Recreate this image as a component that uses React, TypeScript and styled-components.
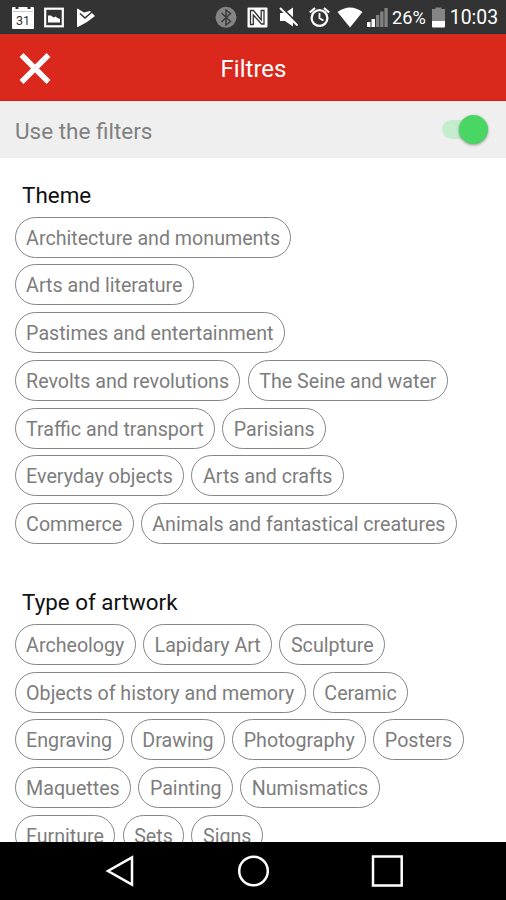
import React from "react";
import styled, { createGlobalStyle } from "styled-components";

const GlobalStyle = createGlobalStyle`
  * { box-sizing: border-box; }
  body { margin: 0; background: #fff; overflow: hidden; }
`;

const Screen = styled.div`
  width: 506px;
  height: 900px;
  display: flex;
  flex-direction: column;
  overflow: hidden;
  background: #fff;
  font-family: Roboto, "Liberation Sans", sans-serif;
`;

const StatusBar = styled.div`
  flex: 0 0 34px;
  height: 34px;
  display: flex;
  align-items: center;
  background: #333333;
  border-bottom: 1px solid #243234;
  color: #fff;
`;

const StatusIcon = styled.svg<{ $gap: number }>`
  flex: none;
  height: 34px;
  margin-left: ${(p) => p.$gap}px;
  display: block;
`;

const StatusText = styled.span<{ $size: number; $gap: number }>`
  margin-left: ${(p) => p.$gap}px;
  font-size: ${(p) => p.$size}px;
  line-height: 30px;
  padding-top: 3px;
  white-space: nowrap;
`;

const Header = styled.header`
  flex: 0 0 67px;
  height: 67px;
  display: grid;
  grid-template-columns: 70px 1fr 70px;
  align-items: center;
  background: #da291c;
  border-bottom: 1px solid #d32018;
  color: #fff;
`;

const CloseButton = styled.button`
  border: 0;
  padding: 2px 0 0;
  background: none;
  height: 66px;
  display: flex;
  align-items: center;
  justify-content: center;
`;

const Title = styled.h1`
  margin: 0;
  padding: 3px 0 0 1px;
  text-align: center;
  font-size: 24px;
  font-weight: 400;
`;

const ToggleRow = styled.div`
  flex: 0 0 56.5px;
  display: flex;
  align-items: center;
  justify-content: space-between;
  padding: 4px 18px 0 15px;
  background: #efefef;
  color: #808080;
  font-size: 22.5px;
`;

const Switch = styled.div`
  width: 46px;
  height: 19px;
  margin-top: -3px;
  border-radius: 10px;
  background: #c3edcc;
  display: flex;
  align-items: center;
  justify-content: flex-end;
`;

const Knob = styled.div`
  width: 29px;
  height: 29px;
  flex: none;
  border-radius: 50%;
  background: #4ad662;
  box-shadow: 0 1px 3px rgba(0, 0, 0, 0.4);
`;

const Content = styled.main`
  flex: 1 1 0;
  min-height: 0;
  overflow: hidden;
  padding: 20px 14.5px 0;
`;

const Section = styled.section`
  margin-bottom: 40.5px;
`;

const Heading = styled.h2`
  margin: 0;
  padding-left: 7.6px;
  height: 39px;
  line-height: 34px;
  font-size: 22.4px;
  font-weight: 400;
  color: #111;
`;

const Chips = styled.div`
  display: flex;
  flex-direction: column;
  gap: 6.8px;
`;

const ChipRow = styled.div`
  display: flex;
  gap: 7.2px;
`;

const Chip = styled.button`
  height: 41px;
  flex: none;
  padding: 2px 10.4px 0 10.6px;
  border: 1px solid #858585;
  border-radius: 21px;
  background: #fff;
  color: #7d7d7d;
  font-family: inherit;
  font-size: 19.65px;
  white-space: nowrap;
`;

const NavBar = styled.nav`
  flex: 0 0 58px;
  display: flex;
  justify-content: center;
  gap: 102px;
  align-items: center;
  background: #000;
`;

const NavIcon = styled.svg`
  width: 32px;
  height: 32px;
  flex: none;
  fill: none;
  stroke: #fff;
  stroke-width: 2.5;
`;

const sections = [
  {
    title: "Theme",
    rows: [
      ["Architecture and monuments"],
      ["Arts and literature"],
      ["Pastimes and entertainment"],
      ["Revolts and revolutions", "The Seine and water"],
      ["Traffic and transport", "Parisians"],
      ["Everyday objects", "Arts and crafts"],
      ["Commerce", "Animals and fantastical creatures"],
    ],
  },
  {
    title: "Type of artwork",
    rows: [
      ["Archeology", "Lapidary Art", "Sculpture"],
      ["Objects of history and memory", "Ceramic"],
      ["Engraving", "Drawing", "Photography", "Posters"],
      ["Maquettes", "Painting", "Numismatics"],
      ["Furniture", "Sets", "Signs"],
    ],
  },
];

const CalendarDay = styled.text`
  font-family: Roboto, sans-serif;
  font-size: 12.5px;
  fill: #333;
`;

function StatusIcons() {
  return (
    <StatusBar>
      <StatusIcon $gap={12} width="22" viewBox="0 0 22 34">
        <path d="M1 7h2.500v2h3v-2h9v2h3v-2H21q1 0 1 1v20q0 1-1 1H1q-1 0-1-1V8q0-1 1-1z" fill="#fff" />
        <path d="M1 11.500h20" stroke="#bbb" strokeWidth="0.8" />
        <CalendarDay x="4" y="24.500">31</CalendarDay>
      </StatusIcon>
      <StatusIcon $gap={10} width="20" viewBox="0 0 20 34">
        <rect x="1.200" y="8.700" width="17.600" height="17.600" fill="none" stroke="#fff" strokeWidth="2.200" />
        <path d="M4 22.500V15.500h3l2.500 2 2-1 2 1.500 2.500 1v3.500z" fill="#fff" />
      </StatusIcon>
      <StatusIcon $gap={12} width="19" viewBox="0 0 19 34">
        <path d="M1.500 8.500L8 12.500l6-1.500 5 5-8 6L2 27q-1 0-1-1V9z" fill="#fff" />
        <path d="M4 13.500l5 4.500 7.500-6.500" fill="none" stroke="#333" strokeWidth="1.600" />
      </StatusIcon>
      <StatusIcon $gap={120} width="22" viewBox="0 0 22 34">
        <circle cx="11" cy="17.300" r="10.500" fill="#858585" />
        <path d="M6.500 13l9 8.500L11 25V10l4.500 3.500-9 8.500" fill="none" stroke="#3a3a3a" strokeWidth="1.500" />
      </StatusIcon>
      <StatusIcon $gap={10} width="21" viewBox="0 0 21 34">
        <rect x="0.500" y="7.500" width="20" height="20" rx="1" fill="#fff" />
        <path d="M3.500 24.500h2.800V15l8.200 9h2.500V10.500h-2.800v9.500L6.500 10.500h-3z" fill="none" stroke="#333" strokeWidth="1.300" />
      </StatusIcon>
      <StatusIcon $gap={11} width="20" viewBox="0 0 20 34">
        <path d="M1 13h5l8-5.500v19L6 21H1z" fill="#fff" />
        <path d="M2.500 7.500L20 24.500" stroke="#333" strokeWidth="2" />
        <path d="M1 8L18.500 25.500" stroke="#fff" strokeWidth="2" />
      </StatusIcon>
      <StatusIcon $gap={10} width="21" viewBox="0 0 21 34">
        <circle cx="10.500" cy="18" r="7.900" fill="none" stroke="#fff" strokeWidth="2.300" />
        <path d="M10.500 13v5.300l4 2.200" fill="none" stroke="#fff" strokeWidth="1.800" />
        <path d="M.8 12.500L6 8M20.200 12.500L15 8" fill="none" stroke="#fff" strokeWidth="2.200" />
      </StatusIcon>
      <StatusIcon $gap={7} width="26" viewBox="0 0 26 34">
        <path d="M0.500 12Q13 3 25.500 12L13 27.500z" fill="#fff" />
      </StatusIcon>
      <StatusIcon $gap={3.5} width="21" viewBox="0 0 21 34">
        <rect x="0" y="22" width="3.500" height="5" fill="#fff" />
        <rect x="4.500" y="19" width="3.500" height="8" fill="#fff" />
        <rect x="9" y="15" width="3.300" height="12" fill="#828282" />
        <rect x="13.200" y="11.500" width="3.300" height="15.500" fill="#828282" />
        <rect x="17.400" y="8" width="3.300" height="19" fill="#828282" />
      </StatusIcon>
      <StatusText $gap={4.5} $size={18.2}>26%</StatusText>
      <StatusIcon $gap={6.5} width="13" viewBox="0 0 13 34">
        <path d="M0 9h3.500V7.500h6V9H13v12H0z" fill="#858585" />
        <path d="M0 21h13v5.500q0 1-1 1H1q-1 0-1-1z" fill="#fff" />
      </StatusIcon>
      <StatusText $gap={4.5} $size={19.4}>10:03</StatusText>
    </StatusBar>
  );
}

export default function App() {
  return (
    <Screen>
      <GlobalStyle />
      <StatusIcons />
      <Header>
        <CloseButton aria-label="Close">
          <svg width="32" height="32" viewBox="0 0 32 32">
            <path d="M2.500 3L29.500 30M29.500 3L2.500 30" stroke="#fff" strokeWidth="5.500" />
          </svg>
        </CloseButton>
        <Title>Filtres</Title>
      </Header>
      <ToggleRow>
        <span>Use the filters</span>
        <Switch role="switch" aria-checked="true">
          <Knob />
        </Switch>
      </ToggleRow>
      <Content>
        {sections.map((section) => (
          <Section key={section.title}>
            <Heading>{section.title}</Heading>
            <Chips>
              {section.rows.map((row) => (
                <ChipRow key={row[0]}>
                  {row.map((label) => (
                    <Chip key={label}>{label}</Chip>
                  ))}
                </ChipRow>
              ))}
            </Chips>
          </Section>
        ))}
      </Content>
      <NavBar>
        <NavIcon viewBox="0 0 32 32">
          <path d="M29 2.500v27L5 16z" />
        </NavIcon>
        <NavIcon viewBox="0 0 32 32">
          <circle cx="16.500" cy="16" r="14.300" />
        </NavIcon>
        <NavIcon viewBox="0 0 32 32">
          <rect x="2" y="1.500" width="28.700" height="29" />
        </NavIcon>
      </NavBar>
    </Screen>
  );
}
